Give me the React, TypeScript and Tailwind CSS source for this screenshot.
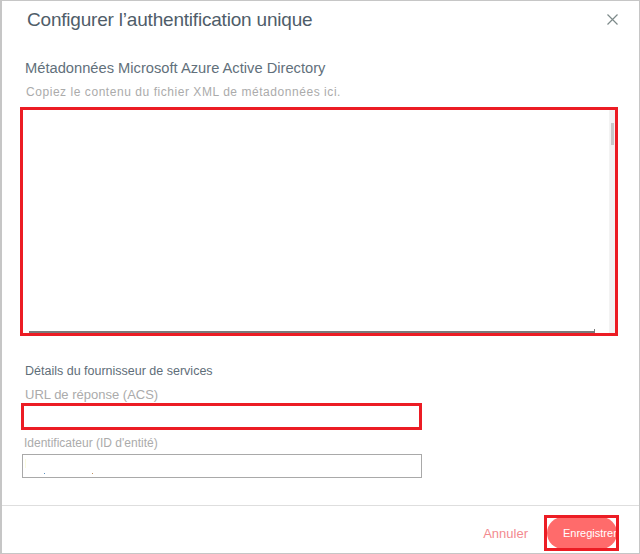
import React from "react";

export default function App() {
  return (
    <div
      className="w-[640px] h-[554px] bg-white border border-[#c6c6c6] border-l-2 flex flex-col overflow-hidden"
      style={{ fontFamily: '"Liberation Sans", Arial, sans-serif' }}
    >
      {/* Header */}
      <div className="flex items-start justify-between pl-[25px] pr-[21px] pt-[7px]">
        <h1 className="text-[19px] leading-6 text-[#4f5d69] font-normal tracking-[-0.2px]">Configurer l’authentification unique</h1>
        <button className="mt-[5px] w-[12px] h-[12px] flex items-center justify-center text-[#7d8a8a]" aria-label="Fermer">
          <svg width="11" height="11" viewBox="0 0 11 11" fill="none" stroke="currentColor" strokeWidth="1.2">
            <path d="M0.5 0.5 L10.5 10.5 M10.5 0.5 L0.5 10.5" />
          </svg>
        </button>
      </div>

      {/* Body */}
      <div className="flex flex-col pl-[18px] pr-[20px]">
        <div className="mt-[26px] pl-[5px] text-[14.7px] leading-5 text-[#62707b] font-light">
          Métadonnées Microsoft Azure Active Directory
        </div>
        <div className="mt-[6px] pl-[6px] text-[12px] leading-4 text-[#ababab] tracking-[0.55px]">
          Copiez le contenu du fichier XML de métadonnées ici.
        </div>

        {/* Textarea with red highlight */}
        <div className="mt-[7px] w-[598px] h-[229px] border-[3px] border-[#ec1c24] flex">
          <div className="flex-1 flex flex-col">
            <div className="flex-1" />
            <div className="h-[2px] ml-[6px] mr-[14px] bg-[#7a7a7a] relative">
              <div className="absolute right-0 bottom-0 w-px h-[4px] bg-[#7a7a7a]" />
            </div>
          </div>
          <div className="w-[6px] bg-[#f3f3f3] flex flex-col items-center pt-[13px]">
            <div className="w-[3px] h-[22px] bg-[#c8c8c8]" />
          </div>
        </div>

        <div className="mt-[27px] pl-[5px] text-[12.5px] leading-4 text-[#5f6e79]">
          Détails du fournisseur de services
        </div>
        <div className="mt-[8px] pl-[5px] text-[13px] leading-4 text-[#ababab]">URL de réponse (ACS)</div>
        <div className="ml-[1px] w-[401px] h-[27px] border-[3px] border-[#ec1c24]" />

        <div className="mt-[5px] pl-[4px] text-[12px] leading-4 text-[#ababab]">Identificateur (ID d'entité)</div>
        <div className="mt-[3px] ml-[2px] w-[400px] h-[24px] border border-[#a9a9a9] relative">
          <div className="absolute left-[2px] top-[4px] w-px h-[9px] bg-[#fbfbe0]" />
          <div className="absolute left-[21px] top-[18px] w-px h-px bg-[#5b8fc0]" />
          <div className="absolute left-[69px] top-[18px] w-px h-px bg-[#c09060]" />
        </div>
      </div>

      {/* Divider */}
      <div className="mt-[27px] h-px bg-[#dedede]" />

      {/* Footer */}
      <div className="flex items-center justify-end pr-[20px] pt-[9px]">
        <button className="text-[13px] text-[#f38a8f] mr-[16px] mt-[2px]">Annuler</button>
        <div className="w-[75px] h-[36px] border-[3px] border-[#ec1c24] flex items-center overflow-hidden">
          <div className="w-[76px] h-[32px] rounded-full bg-[#ff6b6b] flex items-center pl-[16px] text-[11px] text-white whitespace-nowrap">
            Enregistrer
          </div>
        </div>
      </div>
    </div>
  );
}
